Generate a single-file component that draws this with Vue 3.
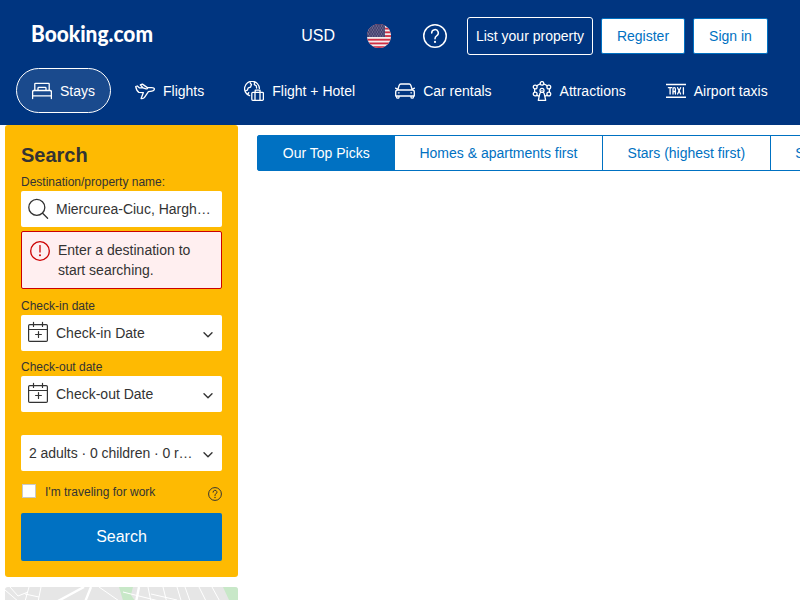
<script setup>
import { ref } from 'vue'

const tabs = [
  { id: 'stays', label: 'Stays' },
  { id: 'flights', label: 'Flights' },
  { id: 'package', label: 'Flight + Hotel' },
  { id: 'cars', label: 'Car rentals' },
  { id: 'attractions', label: 'Attractions' },
  { id: 'taxis', label: 'Airport taxis' },
]
const activeTab = ref('stays')
const sorts = ['Our Top Picks', 'Homes & apartments first', 'Stars (highest first)', 'Stars (lowest first)']
const activeSort = ref(0)
const work = ref(false)
const stripes = [0, 1, 2, 3, 4, 5, 6]
</script>

<template>
  <div class="page">
    <header class="header">
      <div class="top">
        <svg class="logo" width="124" height="28" viewBox="0 0 124 28">
          <text x="-1" y="20" textLength="122" lengthAdjust="spacingAndGlyphs">Booking.com</text>
        </svg>
        <div class="actions">
          <span class="currency">USD</span>
          <svg class="flag" width="24" height="24" viewBox="0 0 24 24">
            <defs><clipPath id="round"><circle cx="12" cy="12" r="12" /></clipPath></defs>
            <g clip-path="url(#round)">
              <rect width="24" height="24" fill="#f3eeee" />
              <rect v-for="n in stripes" :key="n" x="0" :y="n * 3.7" width="24" height="1.85" fill="#cf2f44" />
              <rect width="18" height="13" fill="#45426f" />
              <g stroke="#aaa5c2" stroke-width="0.8" stroke-dasharray="1 1.6">
                <path d="M1 2h17M2.3 4h16M1 6h17M2.3 8h16M1 10h17M2.3 12h16" />
              </g>
            </g>
          </svg>
          <svg class="help" width="24" height="24" viewBox="0 0 24 24" fill="none" stroke="#fff" stroke-width="1.5">
            <circle cx="12" cy="12" r="11.25" />
            <path d="M8.7 8.9a3.3 3.3 0 1 1 4.9 2.9c-1 .55-1.6 1-1.6 2.9" stroke-linecap="round" />
            <circle cx="12" cy="17.9" r="1.1" fill="#fff" stroke="none" />
          </svg>
          <button class="list-btn">List your property</button>
          <button class="auth-btn register">Register</button>
          <button class="auth-btn">Sign in</button>
        </div>
      </div>
      <nav class="tabs">
        <a v-for="t in tabs" :key="t.id" class="tab" :class="{ active: t.id === activeTab }" @click="activeTab = t.id">
          <svg width="20" height="20" viewBox="0 0 20 20" fill="none" stroke="#fff" stroke-width="1.3" stroke-linejoin="round" stroke-linecap="round">
            <g v-if="t.id === 'stays'">
              <path d="M2.8 9.2V3.1q0-.7.7-.7h13q.7 0 .7.7v6.1M.6 17.5v-6.6q0-1.4 1.4-1.4h16q1.4 0 1.4 1.4v6.6M.6 14.8h18.8" />
              <path d="M6 9V7.2q0-.8.8-.8h6.4q.8 0 .8.8V9" />
            </g>
            <path v-else-if="t.id === 'flights'" d="M.7 5.5l1.6-.5 2.2 1.9 3.4-.1-2.6-2.9 2.1-.8 5 3.5h4.5q2.5.1 2.5 1.5-.1 1.6-2.5 2l-3.5.6-3.9 5.7q-1 1.4-3.4 1.1l2.2-5.8-4.4-.3Q1.6 10 .7 5.5zM7.9 6.8l3.2 1.1q1.4.2 1.5-1.3" />
            <g v-else-if="t.id === 'package'">
              <path d="M5.6 14.7A7.4 7.4 0 1 1 15.4 7.4M1.4 10l2-.9.9-2.3 2.2-.6 1-2.6-1.2-1.6M3.8 13.4l.9-1.8M10.6 1.4l-.3 2.2 2 1.2.3 2.2" />
              <path d="M8.8 11.3h9.6q1 0 1 1v6q0 1-1 1H8.8q-1 0-1-1v-6q0-1 1-1zM11.2 11.3V9.2h4.8v2.1M11 11.3v8M16 11.3v8" />
            </g>
            <g v-else-if="t.id === 'cars'">
              <path d="M2.7 9l1.5-4.8Q4.6 3 5.8 3h8.4q1.2 0 1.6 1.2L17.3 9M2.7 9h14.6q2 0 2 2v4H.7v-4q0-2 2-2zM1.6 15v1.2q0 1 1.2 1T4 16.2V15M16 15v1.2q0 1 1.2 1t1.2-1V15M.5 7.2l2 .8M19.5 7.2l-2 .8" />
              <path d="M3.5 11.8h.6M15.9 11.8h.6" />
            </g>
            <g v-else-if="t.id === 'attractions'">
              <circle cx="10" cy="2.4" r="1.8" /><circle cx="3.2" cy="6" r="1.9" /><circle cx="16.8" cy="6" r="1.9" />
              <circle cx="3.2" cy="13" r="1.9" /><circle cx="16.8" cy="13" r="1.9" /><circle cx="10" cy="9.4" r="2" />
              <path d="M5 4.8q1.2-1.2 3-1.7M15 4.8q-1.2-1.2-3-1.7M2.6 8v2.9M17.4 8v2.9M7.8 12.6L6.3 19.3h7.4l-1.5-6.7M8.8 11l-1 1.8M11.2 11l1 1.8M5 14.3l1.8.8M15 14.3l-1.8.8M10 9.4v.2" />
            </g>
            <g v-else>
              <path d="M0 3.5h20M0 16.3h20" stroke-width="1.6" stroke-linecap="butt" />
              <path d="M2.4 6.7h3.4M4.1 6.7v6.3M7 13V8q0-1.3 1.2-1.3T9.4 8v5M7 10.5h2.4M11.6 6.7l3 6.3M14.6 6.7l-3 6.3M17.4 6.7V13" />
            </g>
          </svg>
          <span>{{ t.label }}</span>
        </a>
      </nav>
    </header>

    <div class="body">
      <aside class="side">
        <form class="search" @submit.prevent>
          <h2>Search</h2>
          <label>Destination/property name:</label>
          <div class="field">
            <svg width="22" height="22" viewBox="0 0 22 22" fill="none" stroke="#333" stroke-width="1.3" stroke-linecap="round">
              <circle cx="9.8" cy="9.4" r="8" /><path d="M15.6 15.3l5 5" />
            </svg>
            <span>Miercurea-Ciuc, Hargh…</span>
          </div>
          <div class="error">
            <svg width="20" height="20" viewBox="0 0 20 20" fill="none" stroke="#c00" stroke-width="1.3">
              <circle cx="10" cy="10" r="9.3" /><path d="M10 4.6v6.4" stroke-linecap="round" /><circle cx="10" cy="14.2" r="1" fill="#c00" stroke="none" />
            </svg>
            <span>Enter a destination to start searching.</span>
          </div>
          <template v-for="d in ['in', 'out']" :key="d">
            <label class="date-label" :class="d">Check-{{ d }} date</label>
            <div class="field">
              <svg class="cal" width="22" height="22" viewBox="0 0 22 22" fill="none" stroke="#333" stroke-width="1.2" stroke-linecap="round">
                <rect x="1.6" y="3.6" width="18.8" height="16.8" rx="1.2" /><path d="M1.6 8.5h18.8M6.5 1.3v4.2M15.5 1.3v4.2M11.5 10.6v5.8M8.6 13.5h5.8" />
              </svg>
              <span>Check-{{ d }} Date</span>
              <svg class="chev" width="12" height="8" viewBox="0 0 12 8"><path d="M2 1.8l4 4 4-4" fill="none" stroke="#333" stroke-width="1.4" stroke-linecap="round" stroke-linejoin="round" /></svg>
            </div>
          </template>
          <div class="field guests">
            <span>2 adults · 0 children · 0 r…</span>
            <svg class="chev" width="12" height="8" viewBox="0 0 12 8"><path d="M2 1.8l4 4 4-4" fill="none" stroke="#333" stroke-width="1.4" stroke-linecap="round" stroke-linejoin="round" /></svg>
          </div>
          <div class="work">
            <span class="box" @click="work = !work"></span>
            <span class="work-text">I'm traveling for work</span>
            <svg width="14" height="14" viewBox="0 0 24 24" fill="none" stroke="#333" stroke-width="1.7">
              <circle cx="12" cy="12" r="11" /><path d="M8.7 8.9a3.3 3.3 0 1 1 4.9 2.9c-1 .55-1.6 1-1.6 2.9" stroke-linecap="round" /><circle cx="12" cy="17.9" r="1.2" fill="#333" stroke="none" />
            </svg>
          </div>
          <button class="submit">Search</button>
        </form>
        <svg class="map" width="233" height="60" viewBox="0 0 233 60">
          <rect width="233" height="60" fill="#e6e6e6" />
          <path d="M114 0h14l-2 8 8 12h-14zM218 0h15v13h-9z" fill="#c8e8c8" />
          <g fill="none" stroke="#fff">
            <path d="M79 0L42 20M86 0l-8 20M134 0l-4 20" stroke-width="2.4" />
            <path d="M0 3l14 12M5 0l8 9 10-4M24 0l-5 18M36 0l-4 20M20 7l14 3M94 0l23 16M118 5l36 9M143 0l4 20M158 0l5 20M172 0l6 20M180 0l5 14M194 0l10 20M207 0l11 20M146 7l26 6" stroke-width="1" />
          </g>
        </svg>
      </aside>
      <main class="main">
        <div class="sorts">
          <a v-for="(s, i) in sorts" :key="s" class="sort" :class="{ active: i === activeSort }" @click="activeSort = i">{{ s }}</a>
        </div>
      </main>
    </div>
  </div>
</template>

<style>
body { background: #fff; overflow: hidden; }
</style>

<style scoped>
.page { width: 800px; height: 600px; overflow: hidden; font-family: "Liberation Sans", Arial, sans-serif; font-size: 14px; line-height: 20px; color: #333; }
.page * { box-sizing: border-box; }
svg { display: block; flex: none; }
button { font-family: inherit; margin: 0; padding: 0; }
.header { height: 125px; background: #003580; color: #fff; padding: 17px 16px 0; }
.top { height: 38px; padding: 0 16px; display: flex; align-items: center; justify-content: space-between; }
.logo { overflow: visible; }
.logo text { font-family: Lato, sans-serif; font-weight: 900; font-size: 22px; fill: #fff; }
.actions { display: flex; align-items: center; }
.currency { font-size: 16px; }
.flag, .help { margin-left: 32px; }
.list-btn { width: 126px; height: 38px; margin-left: 20px; border: 1px solid #fff; border-radius: 3px; background: none; color: #fff; font-size: 14px; white-space: nowrap; }
.auth-btn { width: 75px; height: 36px; margin-left: 8px; border: 1px solid #0071c2; border-radius: 2px; background: #fff; color: #0071c2; font-size: 14px; }
.auth-btn.register { width: 84px; }
.tabs { display: flex; gap: 8px; margin-top: 13px; }
.tab { height: 45px; padding: 0 15px; border: 1px solid transparent; border-radius: 23px; display: flex; align-items: center; gap: 8px; white-space: nowrap; }
.tab.active { border-color: #fff; background: #1a4a8d; }
.body { display: flex; padding-left: 5px; }
.side { width: 233px; flex: none; }
.search { height: 452px; background: #feba02; border-radius: 3px; padding: 16px; }
h2 { margin: 0 0 4px; font-size: 20px; line-height: 28px; }
label { display: block; height: 18px; font-size: 12px; line-height: 18px; }
.date-label.in { margin-top: 8px; }
.date-label.out { margin-top: 7px; }
.field { height: 36px; background: #fff; border-radius: 2px; padding: 0 8px 0 6px; display: flex; align-items: center; white-space: nowrap; }
.field span { margin-left: 7px; }
.cal { margin-top: -2px; }
.chev { margin: 4px 0 0 auto; }
.guests { margin-top: 23px; }
.field.guests span { margin-left: 2px; letter-spacing: -0.05px; }
.error { margin-top: 4px; height: 58px; border: 1px solid #c00; border-radius: 2px; background: #ffeff0; padding: 8px; display: flex; gap: 8px; }
.error svg { margin-top: 1px; }
.work { display: flex; height: 42px; font-size: 12px; line-height: 18px; padding-top: 12px; }
.box { width: 14px; height: 14px; margin: 1px 9px 0 1px; background: #fff; border: 1px solid #c8c8c8; }
.work-text { flex: 1; }
.work svg { margin-top: 4px; }
.submit { display: block; width: 201px; height: 48px; border: 0; border-radius: 2px; background: #0071c2; color: #fff; font-size: 16px; }
.map { margin-top: 10px; border-radius: 3px 3px 0 0; }
.main { flex: 1; min-width: 0; padding: 10px 0 0 19px; overflow: hidden; }
.sorts { display: flex; width: max-content; border: 1px solid #0071c2; border-radius: 2px; }
.sort { height: 34px; line-height: 34px; padding: 0 24.6px; border-right: 1px solid #0071c2; color: #0071c2; white-space: nowrap; }
.sort.active { padding: 0 25.2px 0 24.8px; background: #0071c2; color: #fff; border-right: 0; }
</style>
